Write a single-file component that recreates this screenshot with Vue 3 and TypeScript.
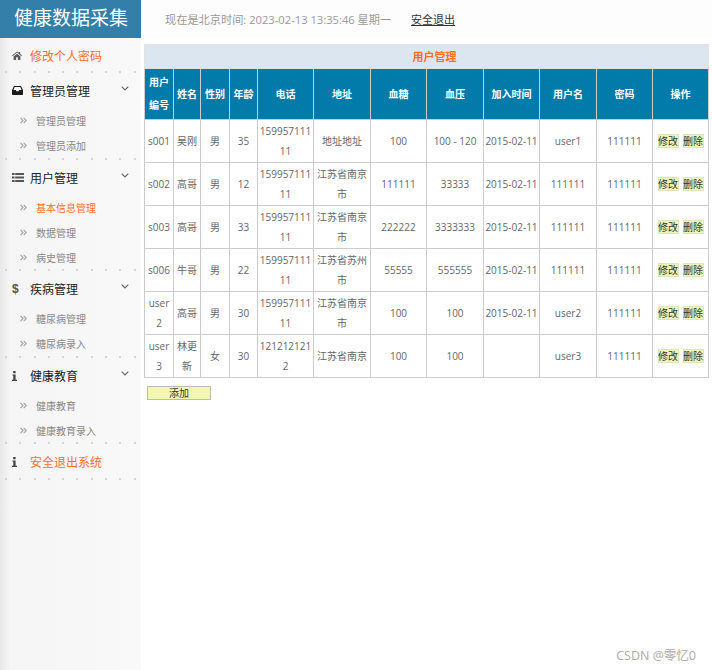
<script setup lang="ts">
interface Row { id: string[]; name: string[]; sex: string; age: string; tel: string[]; addr: string[]; sugar: string; bp: string; date: string; user: string; pwd: string }
const rows: Row[] = [
  { id: ['s001'], name: ['吴刚'], sex: '男', age: '35', tel: ['159957111', '11'], addr: ['地址地址'], sugar: '100', bp: '100 - 120', date: '2015-02-11', user: 'user1', pwd: '111111' },
  { id: ['s002'], name: ['高哥'], sex: '男', age: '12', tel: ['159957111', '11'], addr: ['江苏省南京', '市'], sugar: '111111', bp: '33333', date: '2015-02-11', user: '111111', pwd: '111111' },
  { id: ['s003'], name: ['高哥'], sex: '男', age: '33', tel: ['159957111', '11'], addr: ['江苏省南京', '市'], sugar: '222222', bp: '3333333', date: '2015-02-11', user: '111111', pwd: '111111' },
  { id: ['s006'], name: ['牛哥'], sex: '男', age: '22', tel: ['159957111', '11'], addr: ['江苏省苏州', '市'], sugar: '55555', bp: '555555', date: '2015-02-11', user: '111111', pwd: '111111' },
  { id: ['user', '2'], name: ['高哥'], sex: '男', age: '30', tel: ['159957111', '11'], addr: ['江苏省南京', '市'], sugar: '100', bp: '100', date: '2015-02-11', user: 'user2', pwd: '111111' },
  { id: ['user', '3'], name: ['林更', '新'], sex: '女', age: '30', tel: ['121212121', '2'], addr: ['江苏省南京'], sugar: '100', bp: '100', date: '', user: 'user3', pwd: '111111' },
]
const heads: string[][] = [['用户', '编号'], ['姓名'], ['性别'], ['年龄'], ['电话'], ['地址'], ['血糖'], ['血压'], ['加入时间'], ['用户名'], ['密码'], ['操作']]
const groups = [
  { icon: 'inbox', title: '管理员管理', cls: 'g87', items: [{ t: '管理员管理' }, { t: '管理员添加' }] },
  { icon: 'list', title: '用户管理', cls: 'g111', items: [{ t: '基本信息管理', on: true }, { t: '数据管理' }, { t: '病史管理' }] },
  { icon: 'dollar', title: '疾病管理', cls: 'g87', items: [{ t: '糖尿病管理' }, { t: '糖尿病录入' }] },
  { icon: 'info', title: '健康教育', cls: 'g86', items: [{ t: '健康教育' }, { t: '健康教育录入' }] },
]
</script>

<template>
  <div class="page">
    <aside class="side">
      <div class="logo">健康数据采集</div>
      <a class="top-link first dots">
        <span class="ic"><svg width="10" height="9" viewBox="0 0 11 10"><path d="M5.5 0.5 0 5l.6.7 4.9-4 4.9 4 .6-.7-2-1.6V1H7.6v1L5.5.5zM1.7 6v4h2.8V7h2v3h2.8V6L5.5 3z" fill="#5a5a5a"/></svg></span>
        <span>修改个人密码</span>
      </a>
      <section v-for="g in groups" :key="g.title" class="group dots" :class="g.cls">
        <div class="head">
          <span class="ic">
            <svg v-if="g.icon === 'inbox'" width="11" height="9" viewBox="0 0 11 9"><path d="M2 0h7l2 4v4.2a.8.8 0 0 1-.8.8H.8A.8.8 0 0 1 0 8.2V4zM2.7 1 1.4 4h2.4l.6 1.3h2.2L7.2 4h2.4L8.3 1z" fill="#1c1c1c" fill-rule="evenodd"/></svg>
            <svg v-else-if="g.icon === 'list'" width="12" height="9" viewBox="0 0 12 9"><path d="M0 0h2.6v2H0zM3.2 0H12v2H3.2zM0 3.5h2.6v2H0zM3.2 3.5H12v2H3.2zM0 7h2.6v2H0zM3.2 7H12v2H3.2z" fill="#555"/></svg>
            <b v-else-if="g.icon === 'dollar'" class="dollar">$</b>
            <svg v-else width="5" height="10" viewBox="0 0 5 10"><path d="M1.2 0h2.4v2.2H1.2zM.4 3.4h3.2V8.8H5V10H0V8.8h1.3V4.6H.4z" fill="#444"/></svg>
          </span>
          <span class="head-t">{{ g.title }}</span>
          <svg class="chev" width="8" height="5" viewBox="0 0 8 5"><path d="M.7.7 4 4 7.3.7" fill="none" stroke="#666" stroke-width="1.2"/></svg>
        </div>
        <div v-for="it in g.items" :key="it.t" class="item" :class="{ on: it.on }">
          <svg width="7" height="7" viewBox="0 0 7 7"><path d="M.5.8 3 3.5.5 6.2M3.7.8 6.2 3.5 3.7 6.2" fill="none" stroke="#a5a5a5" stroke-width="1.2"/></svg>
          <span>{{ it.t }}</span>
        </div>
      </section>
      <a class="top-link last dots">
        <span class="ic"><svg width="5" height="10" viewBox="0 0 5 10"><path d="M1.2 0h2.4v2.2H1.2zM.4 3.4h3.2V8.8H5V10H0V8.8h1.3V4.6H.4z" fill="#444"/></svg></span>
        <span>安全退出系统</span>
      </a>
    </aside>

    <main class="main">
      <header class="bar">
        <span class="now">现在是北京时间: 2023-02-13 13:35:46 星期一</span>
        <a class="logout">安全退出</a>
      </header>
      <div class="content">
        <table class="grid">
          <colgroup>
            <col v-for="(h, i) in heads" :key="i" :class="'c' + i" />
          </colgroup>
          <thead>
            <tr><th colspan="12" class="title">用户管理</th></tr>
            <tr class="cols">
              <th v-for="(h, i) in heads" :key="i"><template v-for="(l, j) in h" :key="j">{{ l }}<br v-if="j < h.length - 1" /></template></th>
            </tr>
          </thead>
          <tbody>
            <tr v-for="r in rows" :key="r.id.join('')">
              <td><template v-for="(l, j) in r.id" :key="j">{{ l }}<br v-if="j < r.id.length - 1" /></template></td>
              <td><template v-for="(l, j) in r.name" :key="j">{{ l }}<br v-if="j < r.name.length - 1" /></template></td>
              <td>{{ r.sex }}</td>
              <td>{{ r.age }}</td>
              <td><template v-for="(l, j) in r.tel" :key="j">{{ l }}<br v-if="j < r.tel.length - 1" /></template></td>
              <td><template v-for="(l, j) in r.addr" :key="j">{{ l }}<br v-if="j < r.addr.length - 1" /></template></td>
              <td>{{ r.sugar }}</td>
              <td>{{ r.bp }}</td>
              <td>{{ r.date }}</td>
              <td>{{ r.user }}</td>
              <td>{{ r.pwd }}</td>
              <td><div class="ops"><button class="mini">修改</button><button class="mini">删除</button></div></td>
            </tr>
          </tbody>
        </table>
        <button class="add">添加</button>
      </div>
    </main>
    <div class="mark">CSDN @零忆0</div>
  </div>
</template>

<style>
html, body { margin: 0; background: #fff; }
</style>

<style scoped>
.page {
  position: relative;
  display: flex;
  width: 712px;
  height: 670px;
  overflow: hidden;
  font-family: "Open Sans", "Noto Sans CJK SC", sans-serif;
  color: #555;
}
.side {
  width: 141px;
  flex: none;
  background: linear-gradient(90deg, #e8e8e8 0, #f5f5f5 10px, #f9f9f9 100%);
}
.logo {
  height: 38px;
  background: #337fa9;
  color: #fff;
  font-size: 19px;
  line-height: 37px;
  padding-left: 14px;
  box-sizing: border-box;
}
.dots {
  background-image: repeating-linear-gradient(90deg, #d4d4d4 0 2px, transparent 2px 14.3px);
  background-size: 100% 2px;
  background-position: 5px bottom;
  background-repeat: no-repeat;
  box-sizing: border-box;
}
.ic {
  width: 18px;
  display: inline-flex;
  align-items: center;
  flex: none;
}
.top-link {
  display: flex;
  align-items: center;
  padding-left: 12px;
  font-size: 12px;
  color: #ff6f1f;
}
.top-link.first { height: 35px; }
.top-link.last { height: 36px; }
.g87 { height: 87px; }
.g86 { height: 86px; }
.g111 { height: 111px; }
.head {
  position: relative;
  display: flex;
  align-items: center;
  height: 35px;
  padding-left: 12px;
  font-size: 12px;
  color: #222;
}
.chev { position: absolute; right: 12px; top: 13px; }
.item {
  display: flex;
  align-items: center;
  gap: 9px;
  height: 25px;
  padding-left: 20px;
  font-size: 10px;
  color: #888;
}
.item.on { color: #ff6f1f; }
.dollar { font: 700 12px "Liberation Sans", sans-serif; color: #555; }
.main { flex: 1; min-width: 0; }
.bar {
  height: 38px;
  box-sizing: border-box;
  display: flex;
  align-items: center;
  padding-left: 24px;
  background: #fdfdfd;
  font-size: 11.2px;
}
.now { color: #999; width: 246px; white-space: nowrap; }
.logout { color: #333; text-decoration: underline; font-size: 11px; }
.content { padding: 6px 3px 0 3px; }
.grid {
  width: 564px;
  table-layout: fixed;
  border-collapse: collapse;
  font-size: 10px;
  color: #666;
  line-height: 20px;
}
.grid th, .grid td {
  border: 1px solid #ccc;
  padding: 0;
  text-align: center;
  white-space: nowrap;
  overflow: hidden;
}
.grid td { height: 43px; box-sizing: border-box; }
.title {
  height: 24px;
  box-sizing: border-box;
  padding-left: 16px !important;
  background: #dce6f1;
  color: #ff6f1f;
  font-size: 11px;
  font-weight: 700;
  border: 1px solid #e2e2e2 !important;
}
.cols th {
  background: #027bab;
  color: #fff;
  font-size: 10px;
  font-weight: 700;
  height: 51px;
  box-sizing: border-box;
  line-height: 23px;
}
.c0 { width: 29px; }
.c1 { width: 27px; }
.c2 { width: 29px; }
.c3 { width: 28px; }
.c4, .c6, .c8, .c10 { width: 56px; }
.c5, .c7, .c9 { width: 57px; }
.c11 { width: 56px; }
.ops { display: flex; justify-content: center; gap: 4px; }
.mini {
  width: 21px;
  height: 14px;
  padding: 0;
  border: none;
  box-shadow: inset 0 0 0 1px #dfe6b8;
  background: #eef5b8;
  color: #333;
  font: 10px/14px "Open Sans", "Noto Sans CJK SC", sans-serif;
}
.add {
  display: block;
  width: 64px;
  height: 14px;
  margin: 8px 0 0 3px;
  padding: 0;
  border: 1px solid #bbb;
  background: #f2f8b0;
  color: #333;
  font: 10px/12px "Open Sans", "Noto Sans CJK SC", sans-serif;
}
.mark {
  position: absolute;
  right: 16px;
  top: 645px;
  font-size: 12.5px;
  color: #aaa;
}
</style>
